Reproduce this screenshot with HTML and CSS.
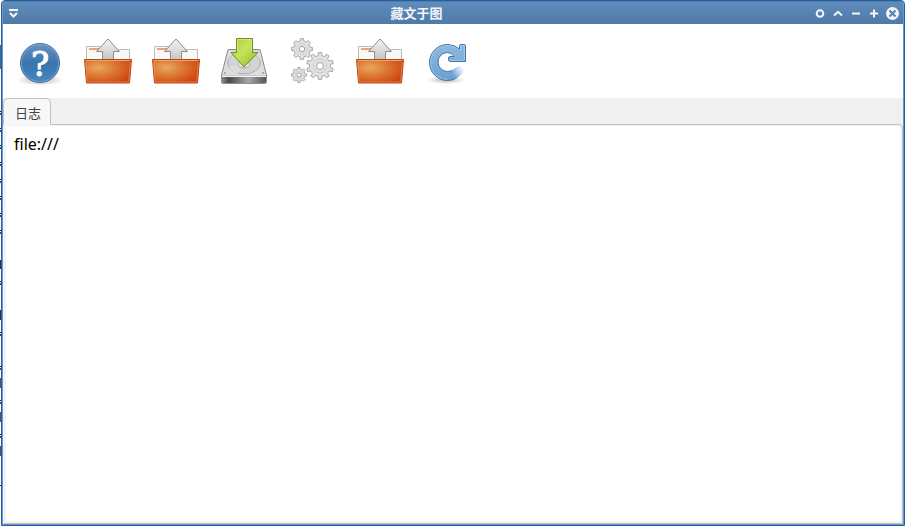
FILE: index.html
```html
<!DOCTYPE html>
<html lang="zh-Hans">
<head>
<meta charset="UTF-8">
<title>藏文于图</title>
<link rel="stylesheet" href="styles.css">
</head>
<body>
<!-- shared gradients and the folder symbol -->
<svg class="defs" width="0" height="0" aria-hidden="true">
    <defs>
        <linearGradient id="blue" x1="0" y1="0" x2="0" y2="1">
            <stop offset="0" stop-color="#6794c6"/>
            <stop offset="0.5" stop-color="#3a74ad"/>
            <stop offset="1" stop-color="#4189bd"/>
        </linearGradient>
        <radialGradient id="orange" cx="0.3" cy="0.35" r="0.75">
            <stop offset="0" stop-color="#e8a862"/>
            <stop offset="0.45" stop-color="#dd7a35"/>
            <stop offset="1" stop-color="#cf4714"/>
        </radialGradient>
        <linearGradient id="silver" x1="0" y1="0" x2="0" y2="1">
            <stop offset="0" stop-color="#f4f4f4"/>
            <stop offset="1" stop-color="#c4c4c4"/>
        </linearGradient>
        <linearGradient id="green" x1="0" y1="0" x2="1" y2="1">
            <stop offset="0" stop-color="#a9cc35"/>
            <stop offset="0.45" stop-color="#c8e35c"/>
            <stop offset="1" stop-color="#8fb61e"/>
        </linearGradient>
        <linearGradient id="metal" x1="0" y1="0" x2="1" y2="0">
            <stop offset="0" stop-color="#8a8a8a"/>
            <stop offset="0.15" stop-color="#484848"/>
            <stop offset="0.6" stop-color="#a8a8a8"/>
            <stop offset="1" stop-color="#555555"/>
        </linearGradient>
        <linearGradient id="sky" x1="0" y1="0" x2="0" y2="1">
            <stop offset="0" stop-color="#8db9e0"/>
            <stop offset="1" stop-color="#6ba0d4"/>
        </linearGradient>
        <linearGradient id="tail" gradientUnits="userSpaceOnUse" x1="29" y1="37" x2="39" y2="31">
            <stop offset="0" stop-color="#fff"/>
            <stop offset="1" stop-color="#fff" stop-opacity="0.05"/>
        </linearGradient>
        <mask id="fade" maskUnits="userSpaceOnUse" x="0" y="0" width="48" height="48">
            <path d="M0 0H48V26H28V48H0Z" fill="#fff"/>
            <path d="M28 26H48V48H28Z" fill="url(#tail)"/>
        </mask>
        <radialGradient id="shade">
            <stop offset="0" stop-color="#000" stop-opacity="0.3"/>
            <stop offset="1" stop-color="#000" stop-opacity="0"/>
        </radialGradient>
    </defs>
    <symbol id="folder" viewBox="0 0 48 48">
        <path d="M2.5 22V8.5H17V11.5H45.5V22Z" fill="#f8f8f8" stroke="#bcbcbc"/>
        <path d="M5 10H16V12H5Z" fill="#f0a175"/>
        <path d="M24 1L35.500 13.500H29.500V22H18.500V13.500H12.500Z" fill="url(#silver)" stroke="#8c8c8c"/>
        <path d="M0.500 21.500H47.500L45.500 45H2.500Z" fill="url(#orange)" stroke="#b9480f"/>
        <path d="M1.500 22.500H46.500" stroke="#eba46a"/>
        <path d="M1.700 24L3.300 44H44.700L46.300 24" fill="none" stroke="#f0a060" stroke-opacity="0.5"/>
    </symbol>
</svg>

<div class="desktop">
<div class="window">
    <header class="titlebar">
        <button class="title-btn" type="button" aria-label="窗口菜单">
            <svg width="11" height="11" viewBox="0 0 11 11"><path d="M1 2H10" stroke="#f3f5f8" stroke-width="2"/><path d="M2 5L5.500 8.500L9 5" fill="none" stroke="#f3f5f8" stroke-width="2"/></svg>
        </button>
        <h1 class="title">藏文于图</h1>
        <div class="title-actions">
            <button class="title-btn" type="button" aria-label="置顶">
                <svg width="13" height="13" viewBox="0 0 13 13"><circle cx="6" cy="6.500" r="3.300" fill="none" stroke="#f3f5f8" stroke-width="2"/></svg>
            </button>
            <button class="title-btn" type="button" aria-label="卷起">
                <svg width="13" height="13" viewBox="0 0 13 13"><path d="M2 8.500L6 4.800L10 8.500" fill="none" stroke="#f3f5f8" stroke-width="2"/></svg>
            </button>
            <button class="title-btn" type="button" aria-label="最小化">
                <svg width="13" height="13" viewBox="0 0 13 13"><path d="M2 6.500H10" stroke="#f3f5f8" stroke-width="2"/></svg>
            </button>
            <button class="title-btn" type="button" aria-label="最大化">
                <svg width="13" height="13" viewBox="0 0 13 13"><path d="M2 6.500H10M6 2.500V10.500" stroke="#f3f5f8" stroke-width="2"/></svg>
            </button>
            <button class="title-btn" type="button" aria-label="关闭">
                <svg width="13" height="13" viewBox="0 0 13 13"><circle cx="6.500" cy="6.500" r="6.500" fill="#f3f5f8"/><path d="M3.500 3.500L9.500 9.500M9.500 3.500L3.500 9.500" stroke="#5481b0" stroke-width="2"/></svg>
            </button>
        </div>
    </header>

    <div class="toolbar" role="toolbar" aria-label="工具栏">
        <button class="tool" type="button" aria-label="帮助">
            <svg class="icon" viewBox="0 0 48 48">
                <ellipse cx="24" cy="42" rx="23" ry="6" fill="url(#shade)"/>
                <circle cx="24" cy="25" r="19.500" fill="url(#blue)" stroke="#3c6c9e"/>
                <circle cx="24" cy="25" r="18.500" fill="none" stroke="#8db4dc" stroke-opacity="0.6"/>
                <text class="help-mark" x="24" y="38" text-anchor="middle">?</text>
            </svg>
        </button>
        <button class="tool" type="button" aria-label="打开图片">
            <svg class="icon"><use href="#folder"/></svg>
        </button>
        <button class="tool" type="button" aria-label="打开文件">
            <svg class="icon"><use href="#folder"/></svg>
        </button>
        <button class="tool" type="button" aria-label="保存">
            <svg class="icon" viewBox="0 0 48 48">
                <path d="M8 11.500H40L46.500 37V44Q46.500 45.500 45 45.500H3Q1.500 45.500 1.500 44V37Z" fill="#c9c9c9" stroke="#8e8e8e"/>
                <path d="M8.500 12.500H39.500L45.500 37H2.500Z" fill="#dedede"/>
                <ellipse cx="24" cy="25" rx="16.500" ry="11" fill="#d4d4d4" stroke="#b0b0b0"/>
                <path d="M24 25L9 29Q12 34 18 35.500Z" fill="#dcdcdc"/>
                <ellipse cx="24" cy="26.500" rx="6" ry="3.500" fill="#e6e6e6" stroke="#ababab"/>
                <circle cx="5" cy="35" r="1" fill="#999"/>
                <circle cx="43" cy="35" r="1" fill="#999"/>
                <path d="M2 38.500H46V43Q46 45 44 45H4Q2 45 2 43Z" fill="url(#metal)"/>
                <path d="M2 38.500H46" stroke="#f2f2f2"/>
                <path d="M16.500 0.500H32.500V14.500H38L24 29L11 14.500H16.500Z" fill="url(#green)" stroke="#6d9418"/>
                <path d="M17.500 13V1.500H31.500V13" fill="none" stroke="#dcee94" stroke-opacity="0.7"/>
            </svg>
        </button>
        <button class="tool" type="button" aria-label="处理">
            <svg class="icon" viewBox="0 0 48 48" id="gears"></svg>
        </button>
        <button class="tool" type="button" aria-label="打开目录">
            <svg class="icon"><use href="#folder"/></svg>
        </button>
        <button class="tool" type="button" aria-label="刷新">
            <svg class="icon" viewBox="0 0 48 48">
                <ellipse cx="22" cy="42" rx="19" ry="4" fill="url(#shade)"/>
                <g mask="url(#fade)">
                    <path d="M35.500 11V8Q35.500 6.500 37 6.500H40Q41.500 6.500 41.500 8V23.500H26.500Q24.500 23.500 24.500 21.500V20Q24.500 18.500 26 18.500H30Q27.500 14.500 23.500 14.500A9.500 9.500 0 0 0 23.500 33.500Q29 33.500 32.500 30Q36 27.500 38.500 30Q40 32 38 34.500Q32 42.500 23.500 42.500A18 18 0 1 1 23.500 6.500Q30.500 6.500 35.500 11Z" fill="url(#sky)" stroke="#3f72a8"/>
                    <path d="M36.500 13V7.500H40.500V22.500H26" fill="none" stroke="#b6d4ee" stroke-opacity="0.6"/>
                    <path d="M35 12A17 17 0 1 0 23 41.500" fill="none" stroke="#b6d4ee" stroke-opacity="0.6"/>
                </g>
            </svg>
        </button>
    </div>

    <div class="tabs" role="tablist">
        <button class="tab" type="button" role="tab" id="tab-log" aria-selected="true" aria-controls="panel-log">日志</button>
    </div>
    <div class="panel" role="tabpanel" id="panel-log" aria-labelledby="tab-log">
        <textarea class="log" aria-labelledby="tab-log" spellcheck="false" readonly>file:///</textarea>
    </div>
</div>
</div>

<script src="gears.js"></script>
</body>
</html>
```

FILE: styles.css
```css
* {
    box-sizing: border-box;
}

body {
    margin: 0;
    font-family: "Noto Sans", "Noto Sans CJK SC", sans-serif;
}

button {
    margin: 0;
    padding: 0;
    border: none;
    background: none;
    cursor: pointer;
}

svg {
    display: block;
}

.defs {
    position: absolute;
}

/* sliver of the page behind the window */
.desktop {
    display: flex;
    min-height: 100vh;
    padding-left: 1px;
    background:
        linear-gradient(#3d6c9f, #3d6c9f) 0 45px / 1px 24px no-repeat,
        linear-gradient(#333, #333) 0 260px / 1px 9px no-repeat,
        linear-gradient(#333, #333) 0 310px / 1px 10px no-repeat,
        linear-gradient(#555, #555) 0 378px / 1px 10px no-repeat,
        linear-gradient(#555, #555) 0 412px / 1px 10px no-repeat,
        linear-gradient(#555, #555) 0 446px / 1px 10px no-repeat,
        linear-gradient(#fff, #fff) 0 0 / 1px 108px no-repeat,
        linear-gradient(#fff, #fff) 0 238px / 1px 38px no-repeat,
        linear-gradient(#fff, #fff) 0 288px / 1px 38px no-repeat,
        linear-gradient(#fff, #fff) 0 340px / 1px 22px no-repeat,
        linear-gradient(#fff, #fff) 0 458px / 1px 24px no-repeat,
        linear-gradient(#fff, #fff) 0 486px / 1px 100% no-repeat,
        repeating-linear-gradient(#fff 0, #fff 9px, #222 9px, #222 10px, #fff 10px, #fff 11px, #444 11px, #444 13px, #fff 13px, #fff 17px);
}

.window {
    flex: 1;
    display: flex;
    flex-direction: column;
    border: 1px solid #2c5c93;
    border-radius: 4px 4px 0 0;
    background: #fff;
    box-shadow: inset 0 0 0 1px #5b9bdf;
    padding: 0 1px 1px;
}

.titlebar {
    display: flex;
    align-items: center;
    justify-content: space-between;
    height: 23px;
    padding: 0 4px 0 5px;
    border-top: 1px solid #4b7fb8;
    background: linear-gradient(#5f8cbb, #4f7aa8);
}

.title {
    flex: 1;
    margin: 0;
    color: #f3f5f8;
    font-size: 13px;
    line-height: 20px;
    font-weight: bold;
    text-align: center;
}

.title-actions {
    display: flex;
    gap: 5px;
}

.toolbar {
    display: flex;
    gap: 20px;
    padding: 14px 13px 12px;
    background: #fff;
}

.icon {
    width: 48px;
    height: 48px;
}

.help-mark {
    fill: #fff;
    stroke: #fff;
    font-family: "DejaVu Serif", serif;
    font-size: 34px;
}

.gear {
    fill: #e2e2e2;
    stroke: #a8a8a8;
}

.gear-ring {
    fill: none;
    stroke: #cecece;
}

.gear-hole {
    fill: #fff;
    stroke: #a3a3a3;
}

.tabs {
    display: flex;
    height: 26px;
    background: #f1f0ee;
}

.tab {
    height: 27px;
    padding: 0 9px 0 11px;
    border: 1px solid #c3c1be;
    border-bottom: none;
    border-radius: 5px 5px 0 0;
    background: #f7f7f7;
    color: #444;
    font-family: inherit;
    font-size: 13px;
    z-index: 1;
}

.panel {
    flex: 1;
    display: flex;
    padding: 1px 2px 2px;
    border: 1px solid #c3c1be;
    border-left-color: #f3f3f6;
    border-radius: 0 4px 0 0;
    background: #f3f3f6;
}

.log {
    flex: 1;
    padding: 7px 8px;
    border: none;
    outline: none;
    resize: none;
    background: #fff;
    color: #000;
    font-family: inherit;
    font-size: 16px;
    line-height: 22px;
}
```

FILE: gears.js
```javascript
const NS = "http://www.w3.org/2000/svg";
const gears = [
    { x: 14, y: 11, r: 10.5, teeth: 8, hole: 2.7 },
    { x: 32, y: 28, r: 13.5, teeth: 10, hole: 3.5 },
    { x: 11, y: 37, r: 7.5, teeth: 8, hole: 2 }
];

function add(name, cls, attrs) {
    const el = document.createElementNS(NS, name);
    el.setAttribute("class", cls);
    for (const key in attrs) el.setAttribute(key, attrs[key]);
    document.getElementById("gears").appendChild(el);
}

function gearPath(g) {
    const step = Math.PI * 2 / g.teeth;
    const inner = g.r * 0.78;
    const points = [];
    for (let i = 0; i < g.teeth; i++) {
        const a = i * step - Math.PI / 2;
        [[-0.27, inner], [-0.2, g.r], [0.2, g.r], [0.27, inner]].forEach(([t, r]) => {
            points.push((g.x + Math.cos(a + t * step) * r) + " " + (g.y + Math.sin(a + t * step) * r));
        });
    }
    return "M" + points.join("L") + "Z";
}

gears.forEach(g => {
    add("path", "gear", { d: gearPath(g), "stroke-linejoin": "round" });
    add("circle", "gear-ring", { cx: g.x, cy: g.y, r: g.r * 0.5 });
    add("circle", "gear-hole", { cx: g.x, cy: g.y, r: g.hole });
});
```
